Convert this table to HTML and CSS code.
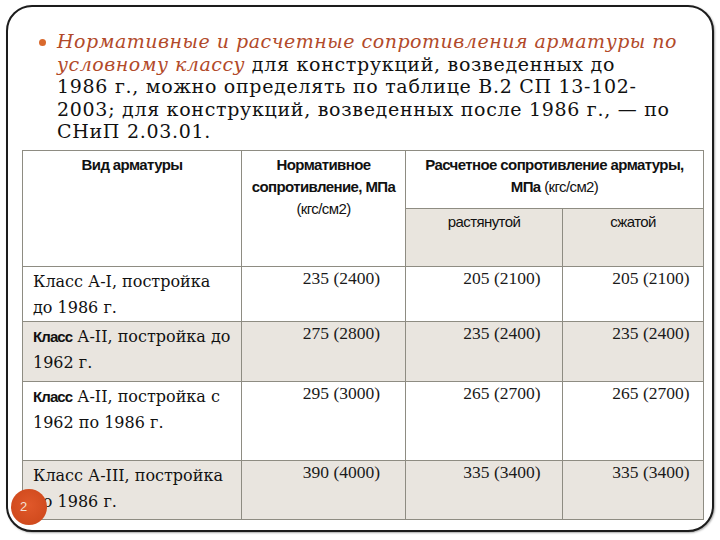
FILE: index.html
```html
<!DOCTYPE html>
<html lang="ru">
<head>
<meta charset="utf-8">
<link rel="stylesheet" href="styles.css">
</head>
<body>
<div class="slide">
  <div class="item">
    <span class="bullet"></span>
    <p class="text"><em class="accent">Нормативные и расчетные сопротивления арматуры по<br>условному классу</em> для конструкций, возведенных до<br>1986 г., можно определять по таблице В.2 СП 13-102-<br>2003; для конструкций, возведенных после 1986 г., — по<br>СНиП 2.03.01.</p>
  </div>
  <table class="grid">
    <colgroup>
      <col class="c1"><col class="c2"><col class="c3"><col class="c4">
    </colgroup>
    <tr class="h1">
      <th rowspan="2">Вид арматуры</th>
      <th rowspan="2">Нормативное<br>сопротивление, МПа<br><span class="unit">(кгс/см2)</span></th>
      <th colspan="2">Расчетное сопротивление арматуры,<br>МПа <span class="unit">(кгс/см2)</span></th>
    </tr>
    <tr class="h2">
      <th class="sub">растянутой</th>
      <th class="sub">сжатой</th>
    </tr>
    <tr class="r1">
      <td class="name">Класс А-I, постройка<br>до 1986 г.</td>
      <td class="num">235 (2400)</td>
      <td class="num">205 (2100)</td>
      <td class="num">205 (2100)</td>
    </tr>
    <tr class="r2 alt">
      <td class="name"><span class="k">Класс</span> А-II, постройка до<br>1962 г.</td>
      <td class="num">275 (2800)</td>
      <td class="num">235 (2400)</td>
      <td class="num">235 (2400)</td>
    </tr>
    <tr class="r3">
      <td class="name"><span class="k">Класс</span> А-II, постройка с<br>1962 по 1986 г.</td>
      <td class="num">295 (3000)</td>
      <td class="num">265 (2700)</td>
      <td class="num">265 (2700)</td>
    </tr>
    <tr class="r4 alt">
      <td class="name">Класс А-III, постройка<br>до 1986 г.</td>
      <td class="num">390 (4000)</td>
      <td class="num">335 (3400)</td>
      <td class="num">335 (3400)</td>
    </tr>
  </table>
  <div class="pagenum">2</div>
</div>
</body>
</html>
```
FILE: styles.css
```css
html, body {
  margin: 0;
  padding: 0;
  background: #ffffff;
}
body {
  width: 720px;
  height: 540px;
  overflow: hidden;
}
.slide {
  position: relative;
  box-sizing: border-box;
  width: 708px;
  height: 527px;
  margin: 5px 0 0 6px;
  border: 2px solid #1c1c1c;
  border-radius: 26px;
  box-shadow: 1px 1px 2px rgba(0,0,0,0.35);
  background: #ffffff;
  padding-top: 23px;
}
.item {
  display: flex;
  align-items: flex-start;
  padding-left: 31px;
}
.bullet {
  flex: none;
  width: 7px;
  height: 7px;
  border-radius: 50%;
  background: #d9692d;
  margin-top: 9px;
  margin-right: 11px;
}
.text {
  margin: 0;
  font-family: "DejaVu Serif", serif;
  font-size: 19px;
  line-height: 22.5px;
  letter-spacing: 0.7px;
  color: #111111;
  white-space: nowrap;
}
.accent {
  font-family: "DejaVu Serif", serif;
  font-style: italic;
  letter-spacing: 0.5px;
  color: #b24a2a;
}
.grid {
  margin: 7px 0 0 14px;
  border-collapse: collapse;
  table-layout: fixed;
  width: 681px;
}
.c1 { width: 219px; }
.c2 { width: 164px; }
.c3 { width: 157px; }
.c4 { width: 141px; }
.grid th, .grid td {
  border: 1px solid #8e8c82;
  padding: 0;
  vertical-align: top;
}
.grid th {
  font-family: "Liberation Sans", sans-serif;
  font-weight: bold;
  font-size: 15px;
  letter-spacing: -0.6px;
  line-height: 22px;
  color: #111111;
  text-align: center;
  padding-top: 3px;
}
.unit {
  font-weight: normal;
}
.h1 { height: 58px; }
.h2 { height: 58px; }
.grid th.sub {
  font-weight: normal;
  background: #e9e5de;
  padding-top: 2px;
}
.r1 { height: 55px; }
.r2 { height: 60px; }
.r3 { height: 79px; }
.r4 { height: 59px; }
.alt td {
  background: #e9e5df;
}
.name {
  font-family: "DejaVu Serif", serif;
  font-size: 16px;
  line-height: 26px;
  color: #111111;
  white-space: nowrap;
  padding: 2px 0 0 10px !important;
}
.k {
  font-family: "Liberation Sans", sans-serif;
  font-weight: bold;
  font-size: 15px;
  letter-spacing: -0.9px;
}
.num {
  font-family: "Liberation Serif", serif;
  font-size: 17.5px;
  line-height: 20px;
  color: #1a1a1a;
  text-align: center;
  padding: 1px 0 0 36px !important;
}
.pagenum {
  position: absolute;
  left: 3px;
  top: 482px;
  width: 36px;
  height: 36px;
  border-radius: 50%;
  background: radial-gradient(circle at 50% 45%, #e0582a 0%, #d14b1e 70%, #b8431c 100%);
  color: #f3e1d6;
  font-family: "Liberation Sans", sans-serif;
  font-size: 13px;
  line-height: 36px;
  text-indent: 9px;
}
```
